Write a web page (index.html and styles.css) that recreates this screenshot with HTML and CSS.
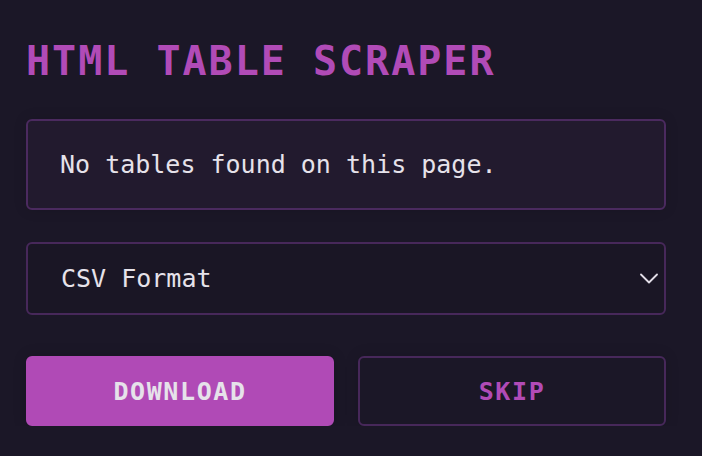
FILE: index.html
```html
<!DOCTYPE html>
<html lang="en">
<head>
<meta charset="utf-8">
<title>HTML Table Scraper</title>
<link rel="stylesheet" href="styles.css">
</head>
<body>
<main class="panel">
  <h1 class="title">HTML TABLE SCRAPER</h1>
  <div class="status">No tables found on this page.</div>
  <div class="select-wrap">
    <select class="format">
      <option>CSV Format</option>
      <option>JSON Format</option>
    </select>
    <svg class="chevron" width="18" height="11" viewBox="0 0 18 11" aria-hidden="true">
      <path d="M1 1.5 L9 9.5 L17 1.5" fill="none" stroke="#e2dee8" stroke-width="1.8" stroke-linecap="round" stroke-linejoin="round"/>
    </svg>
  </div>
  <div class="actions">
    <button class="btn btn-primary">DOWNLOAD</button>
    <button class="btn btn-ghost">SKIP</button>
  </div>
</main>
</body>
</html>
```
FILE: styles.css
```css
html, body {
  margin: 0;
  padding: 0;
  background: #1b1727;
}
body {
  font-family: "DejaVu Sans Mono", "Liberation Mono", monospace;
  color: #e6e2ea;
}
.panel {
  width: 640px;
  padding: 41px 0 0 26px;
}
.title {
  margin: 0;
  font-size: 40px;
  line-height: 40px;
  font-weight: bold;
  letter-spacing: 2px;
  color: #b14bb7;
}
.status {
  margin-top: 38px;
  border: 2px solid #4b2a5f;
  border-radius: 6px;
  background: #221a2e;
  padding: 25.5px 32px;
  font-size: 25px;
  line-height: 36px;
  letter-spacing: 0;
  color: #e6e2ea;
  box-shadow: 0 0 14px rgba(0, 0, 0, 0.12);
}
.select-wrap {
  position: relative;
  margin-top: 32px;
}
.format {
  appearance: none;
  -webkit-appearance: none;
  display: block;
  width: 100%;
  height: 73px;
  margin: 0;
  border: 2px solid #47285a;
  border-radius: 6px;
  background: #1a1625;
  color: #e6e2ea;
  padding: 0 32px 0 33px;
  font-family: inherit;
  font-size: 25px;
  letter-spacing: 0;
  outline: none;
}
.chevron {
  position: absolute;
  right: 8px;
  top: 31px;
  pointer-events: none;
}
.actions {
  display: grid;
  grid-template-columns: 1fr 1fr;
  gap: 24px;
  margin-top: 41px;
}
.btn {
  height: 70px;
  border-radius: 6px;
  font-family: inherit;
  font-size: 25px;
  font-weight: bold;
  letter-spacing: 1.6px;
  cursor: pointer;
  box-shadow: 0 0 14px rgba(0, 0, 0, 0.15);
}
.btn-primary {
  background: #b04ab6;
  border: 2px solid #b04ab6;
  color: #e6e2ea;
}
.btn-ghost {
  background: transparent;
  border: 2px solid #47285a;
  color: #b14bb7;
}
```
